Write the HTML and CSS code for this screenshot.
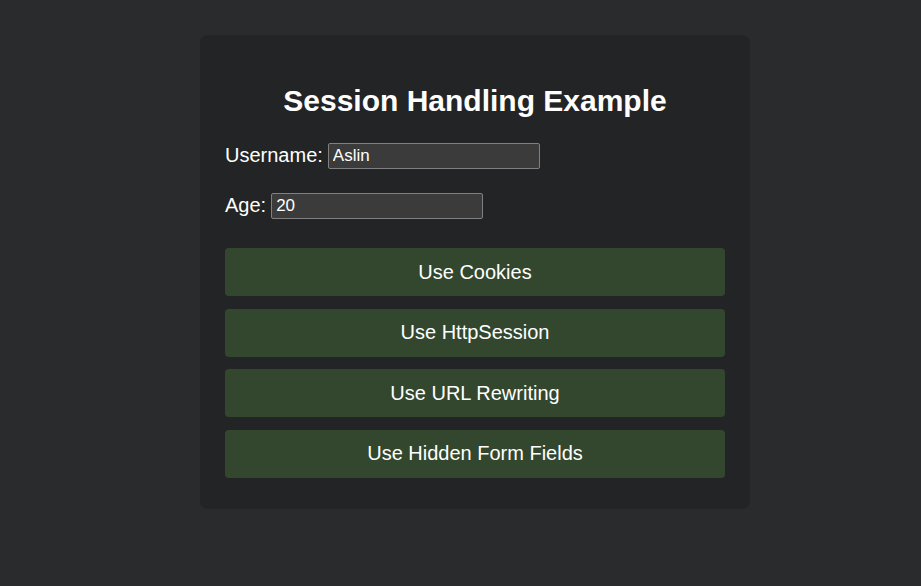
FILE: index.html
```html
<!DOCTYPE html>
<html>
<head>
<meta charset="utf-8">
<link rel="stylesheet" href="styles.css">
</head>
<body>
<div class="card">
  <h2 class="title">Session Handling Example</h2>
  <form class="form">
    <div class="row"><label>Username:</label><input class="field" type="text" value="Aslin"></div>
    <div class="row"><label>Age:</label><input class="field" type="text" value="20"></div>
    <div class="buttons">
      <button type="button" class="btn">Use Cookies</button>
      <button type="button" class="btn">Use HttpSession</button>
      <button type="button" class="btn">Use URL Rewriting</button>
      <button type="button" class="btn">Use Hidden Form Fields</button>
    </div>
  </form>
</div>
</body>
</html>
```
FILE: styles.css
```css
html, body {
  margin: 0;
  padding: 0;
  background: #2a2b2d;
  height: 100%;
}
body {
  font-family: "Liberation Sans", Arial, sans-serif;
  color: #ffffff;
  font-size: 20px;
}
.card {
  box-sizing: border-box;
  width: 550px;
  margin: 35px 0 0 200px;
  padding: 25px 25px 31px;
  background: #232426;
  border-radius: 8px;
}
.title {
  font-size: 30px;
  font-weight: bold;
  text-align: center;
  margin: 23px 0 24px;
  line-height: 35px;
}
.form {
  display: flex;
  flex-direction: column;
}
.row {
  display: flex;
  align-items: center;
  gap: 5px;
  height: 26px;
  margin-bottom: 24px;
}
.field {
  box-sizing: border-box;
  width: 212px;
  height: 26px;
  background: #3b3b3b;
  border: 1px solid #808080;
  border-radius: 2px;
  color: #ffffff;
  font-family: "Liberation Sans", Arial, sans-serif;
  font-size: 17px;
  padding: 2px 4px;
  margin-top: 2px;
}
.buttons {
  display: flex;
  flex-direction: column;
  gap: 12.5px;
  margin-top: 6px;
}
.btn {
  height: 48px;
  width: 100%;
  background: #33472e;
  border: none;
  border-radius: 4px;
  color: #ffffff;
  font-family: "Liberation Sans", Arial, sans-serif;
  font-size: 20px;
}
```
